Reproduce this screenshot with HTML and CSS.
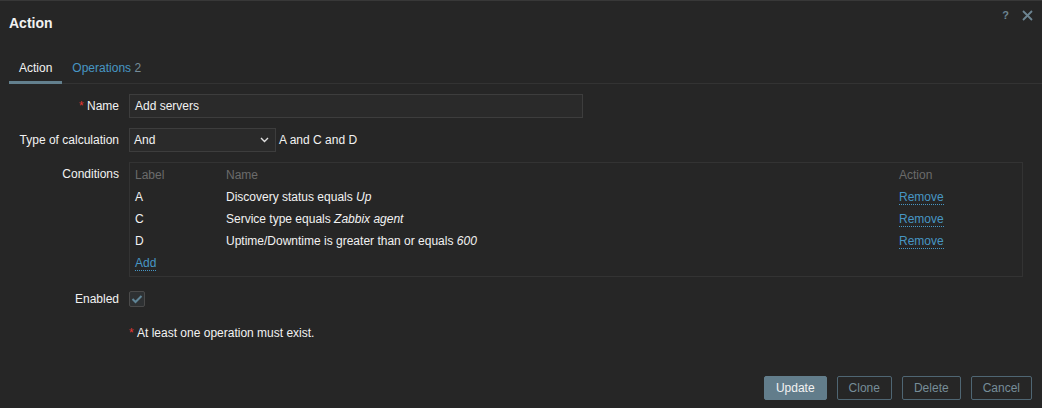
FILE: index.html
```html
<!DOCTYPE html>
<html>
<head>
<meta charset="utf-8">
<link rel="stylesheet" href="styles.css">
</head>
<body>
<div class="dialog">
  <div class="header">
    <h1 class="title">Action</h1>
    <div class="header-icons">
      <span class="help">?</span>
      <svg class="close" width="11" height="11" viewBox="0 0 11 11"><path d="M1 1 L10 10 M10 1 L1 10" stroke="#6d8592" stroke-width="1.8" fill="none"/></svg>
    </div>
  </div>
  <div class="content">
    <ul class="tabs">
      <li class="tab active">Action</li>
      <li class="tab"><span class="link">Operations</span> <span class="count">2</span></li>
    </ul>
    <div class="form">
      <div class="label"><span class="req">*</span> Name</div>
      <div class="field"><div class="input name-input">Add servers</div></div>

      <div class="label">Type of calculation</div>
      <div class="field">
        <div class="input select">And
          <svg class="chev" width="9" height="6" viewBox="0 0 9 6"><path d="M1 1 L4.5 4.5 L8 1" stroke="#e0e0e0" stroke-width="1.4" fill="none"/></svg>
        </div>
        <span class="formula">A and C and D</span>
      </div>

      <div class="label top">Conditions</div>
      <div class="field">
        <div class="cond-table">
          <div class="row head"><span>Label</span><span>Name</span><span>Action</span></div>
          <div class="row"><span>A</span><span>Discovery status equals <i>Up</i></span><span><span class="link dotted">Remove</span></span></div>
          <div class="row"><span>C</span><span>Service type equals <i>Zabbix agent</i></span><span><span class="link dotted">Remove</span></span></div>
          <div class="row"><span>D</span><span>Uptime/Downtime is greater than or equals <i>600</i></span><span><span class="link dotted">Remove</span></span></div>
          <div class="row"><span><span class="link dotted">Add</span></span><span></span><span></span></div>
        </div>
      </div>

      <div class="label">Enabled</div>
      <div class="field">
        <span class="checkbox"><svg width="12" height="10" viewBox="0 0 12 10"><path d="M1.5 5 L4.5 8 L10.5 2" stroke="#5f8496" stroke-width="2" fill="none"/></svg></span>
      </div>

      <div class="label"></div>
      <div class="field note"><span class="req">*</span>&nbsp;At least one operation must exist.</div>
    </div>
  </div>
  <div class="footer">
    <button class="btn primary">Update</button>
    <button class="btn">Clone</button>
    <button class="btn">Delete</button>
    <button class="btn">Cancel</button>
  </div>
</div>
</body>
</html>
```

FILE: styles.css
```css
html, body {
  margin: 0;
  padding: 0;
  background: #262626;
}
body {
  font-family: "Liberation Sans", Arial, sans-serif;
  font-size: 12px;
  color: #f2f2f2;
}
.dialog {
  width: 1042px;
  height: 408px;
  box-sizing: border-box;
  border-top: 1px solid #383838;
  display: flex;
  flex-direction: column;
}
.header {
  height: 43px;
  display: flex;
  align-items: center;
  justify-content: space-between;
  padding: 0 9px 0 9px;
}
.title {
  margin: 0;
  font-size: 14px;
  font-weight: bold;
  color: #f2f2f2;
}
.header-icons {
  display: flex;
  align-items: center;
  gap: 13px;
  align-self: flex-start;
  margin-top: 8px;
}
.help {
  color: #6d8592;
  font-size: 11px;
  font-weight: bold;
}
.close {
  display: block;
}
.content {
  padding: 0 0 0 9px;
}
.tabs {
  list-style: none;
  margin: 12px 0 0 0;
  padding: 0;
  display: flex;
  border-bottom: 1px solid #333333;
}
.tab {
  padding: 5px 10px 5px 10px;
  line-height: 15px;
  border-bottom: 3px solid transparent;
  margin-bottom: -1px;
  color: #f2f2f2;
}
.tab.active {
  border-bottom-color: #63808e;
}
.link {
  color: #4796c4;
}
.count {
  color: #768d99;
}
.form {
  display: grid;
  grid-template-columns: 110px 1fr;
  column-gap: 10px;
  row-gap: 10px;
  padding-top: 10px;
  padding-right: 20px;
}
.label {
  text-align: right;
  line-height: 24px;
  min-height: 24px;
  color: #f2f2f2;
}
.label.top {
  line-height: 14px;
  padding-top: 5px;
}
.req {
  color: #e33734;
}
.field {
  display: flex;
  align-items: center;
  min-height: 24px;
}
.input {
  box-sizing: border-box;
  height: 24px;
  line-height: 22px;
  background: #2a2a2a;
  border: 1px solid #3d3d3d;
  padding: 0 5px;
  color: #f2f2f2;
}
.name-input {
  width: 454px;
}
.select {
  width: 147px;
  position: relative;
  padding-left: 4px;
}
.chev {
  position: absolute;
  right: 6px;
  top: 8px;
}
.formula {
  margin-left: 3px;
}
.cond-table {
  box-sizing: border-box;
  width: 894px;
  border: 1px solid #333333;
  padding: 1px 5px 2px 5px;
}
.row {
  display: grid;
  grid-template-columns: 91px 1fr 118px;
  height: 22px;
  line-height: 22px;
}
.row.head {
  color: #6b6b6b;
}
.dotted {
  border-bottom: 1px dotted #4796c4;
  line-height: 14px;
  display: inline-block;
}
.checkbox {
  box-sizing: border-box;
  width: 16px;
  height: 16px;
  border: 1px solid #4a4a4a;
  background: #2e3133;
  border-radius: 2px;
  display: flex;
  align-items: center;
  justify-content: center;
}
.checkbox svg {
  display: block;
}
.note {
  color: #f2f2f2;
}
.footer {
  margin-top: auto;
  display: flex;
  justify-content: flex-end;
  gap: 10px;
  padding: 0 10px 8px 0;
}
.btn {
  font-family: "Liberation Sans", Arial, sans-serif;
  font-size: 12px;
  height: 24px;
  padding: 0 11px;
  background: transparent;
  border: 1px solid #4f6673;
  color: #768d99;
  border-radius: 2px;
  box-sizing: border-box;
}
.btn.primary {
  background: #627d8b;
  border-color: #627d8b;
  color: #f2f2f2;
}
```
